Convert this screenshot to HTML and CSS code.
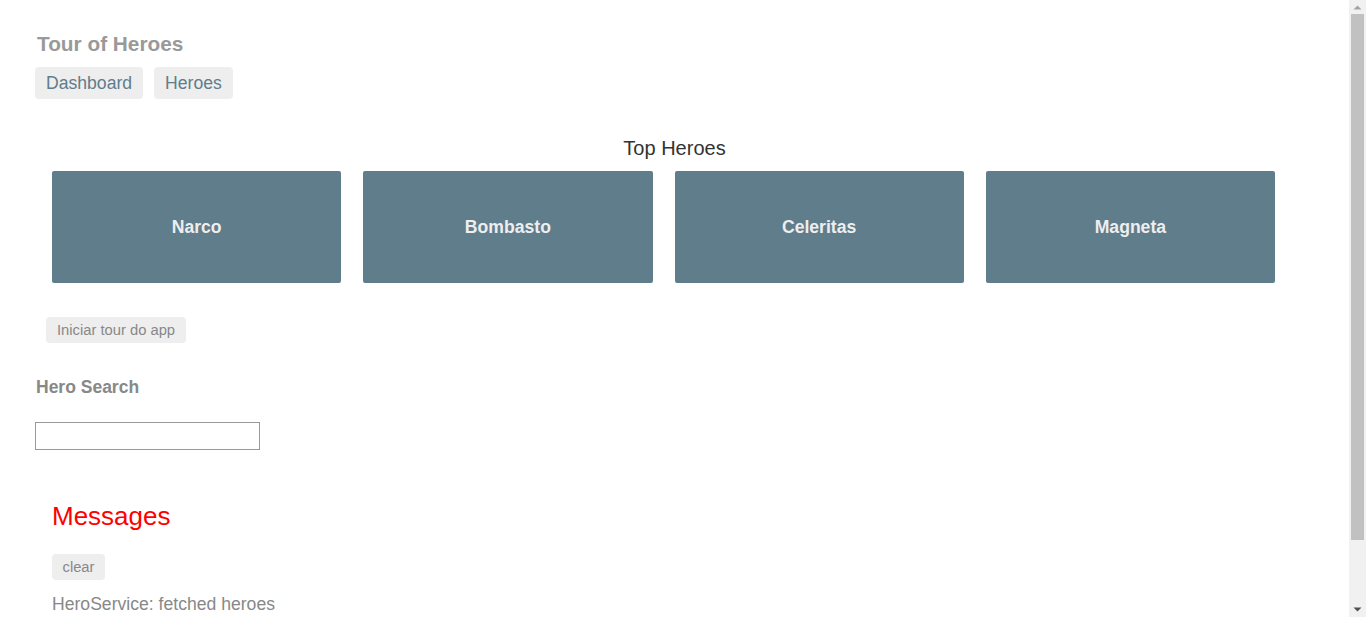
FILE: index.html
```html
<!DOCTYPE html>
<html lang="pt">
<head>
<meta charset="utf-8">
<title>Tour of Heroes</title>
<link rel="stylesheet" href="styles.css">
</head>
<body>
  <h1 class="app-title">Tour of Heroes</h1>
  <nav class="main-nav">
    <a href="#" class="nav-link">Dashboard</a>
    <a href="#" class="nav-link">Heroes</a>
  </nav>

  <section class="dashboard">
    <h2 class="dash-title">Top Heroes</h2>
    <div class="hero-grid">
      <a href="#" class="hero-card">Narco</a>
      <a href="#" class="hero-card">Bombasto</a>
      <a href="#" class="hero-card">Celeritas</a>
      <a href="#" class="hero-card">Magneta</a>
    </div>
    <button class="soft-btn tour-btn" type="button">Iniciar tour do app</button>
  </section>

  <section class="search">
    <h4 class="search-title">Hero Search</h4>
    <input class="search-input" type="text" aria-label="Hero Search">
  </section>

  <section class="messages">
    <h2 class="messages-title">Messages</h2>
    <button class="soft-btn clear-btn" type="button">clear</button>
    <div class="message">HeroService: fetched heroes</div>
  </section>

  <div class="fake-scrollbar" aria-hidden="true">
    <svg class="sb-arrow sb-up" width="17" height="17" viewBox="0 0 17 17"><path d="M4.5 9.5 L8.5 5.5 L12.5 9.5 Z" fill="#a3a3a3"/></svg>
    <div class="sb-track"><div class="sb-thumb"></div></div>
    <svg class="sb-arrow sb-down" width="17" height="17" viewBox="0 0 17 17"><path d="M4.5 7.5 L12.5 7.5 L8.5 11.5 Z" fill="#505050"/></svg>
  </div>
</body>
</html>
```

FILE: styles.css
```css
html, body {
  margin: 0;
  background: #fff;
}

body {
  padding: 32px 52px 70px 35px;
  font-family: "Liberation Sans", Arial, Helvetica, sans-serif;
  color: #333;
}

.app-title {
  margin: 0 0 0 2px;
  font-size: 20.8px;
  line-height: 24px;
  font-weight: bold;
  color: #999;
}

.main-nav {
  display: flex;
  gap: 11px;
  margin-top: 11px;
}

.nav-link {
  display: inline-block;
  padding: 6px 11px;
  font-size: 17.6px;
  line-height: 20px;
  color: #607d8b;
  background: #eee;
  border-radius: 4px;
  text-decoration: none;
}

.dash-title {
  margin: 38px 0 0;
  text-align: center;
  font-size: 20px;
  line-height: 23px;
  font-weight: normal;
  color: #333;
}

.hero-grid {
  display: grid;
  grid-template-columns: repeat(4, 1fr);
  gap: 22px;
  margin-top: 11px;
  padding: 0 39px 0 17px;
}

.hero-card {
  display: flex;
  align-items: center;
  justify-content: center;
  height: 112px;
  background: #607d8b;
  color: #eee;
  border-radius: 2px;
  font-size: 17.6px;
  font-weight: bold;
  text-decoration: none;
}

.soft-btn {
  display: inline-block;
  border: none;
  background: #eee;
  border-radius: 4px;
  font-family: "Liberation Sans", Arial, Helvetica, sans-serif;
  font-size: 14.75px;
  line-height: 17px;
  color: #888;
  padding: 4.5px 11px;
  cursor: pointer;
}

.tour-btn {
  margin: 34px 0 0 11px;
}

.search-title {
  margin: 34px 0 0 1px;
  font-size: 17.5px;
  line-height: 20px;
  font-weight: bold;
  color: #888;
}

.search-input {
  display: block;
  box-sizing: border-box;
  width: 225px;
  height: 28px;
  margin-top: 25px;
  border: 1px solid #999;
  padding: 0 4px;
  font-family: "Liberation Sans", Arial, sans-serif;
}

.messages {
  padding-left: 17px;
}

.messages-title {
  margin: 51px 0 0;
  font-size: 26px;
  line-height: 30px;
  font-weight: normal;
  color: #f00;
}

.clear-btn {
  margin-top: 23px;
  padding: 4.5px 10.5px;
}

.message {
  margin-top: 13.5px;
  font-size: 17.6px;
  line-height: 20px;
  color: #888;
}

.fake-scrollbar {
  position: fixed;
  top: 0;
  right: 0;
  width: 17px;
  height: 100vh;
  background: #f1f1f1;
  display: flex;
  flex-direction: column;
}

.sb-arrow {
  display: block;
  flex: none;
}

.sb-track {
  flex: 1;
}

.sb-thumb {
  width: 13px;
  height: 526px;
  margin: -3px auto 0 2px;
  background: #c1c1c1;
}
```
